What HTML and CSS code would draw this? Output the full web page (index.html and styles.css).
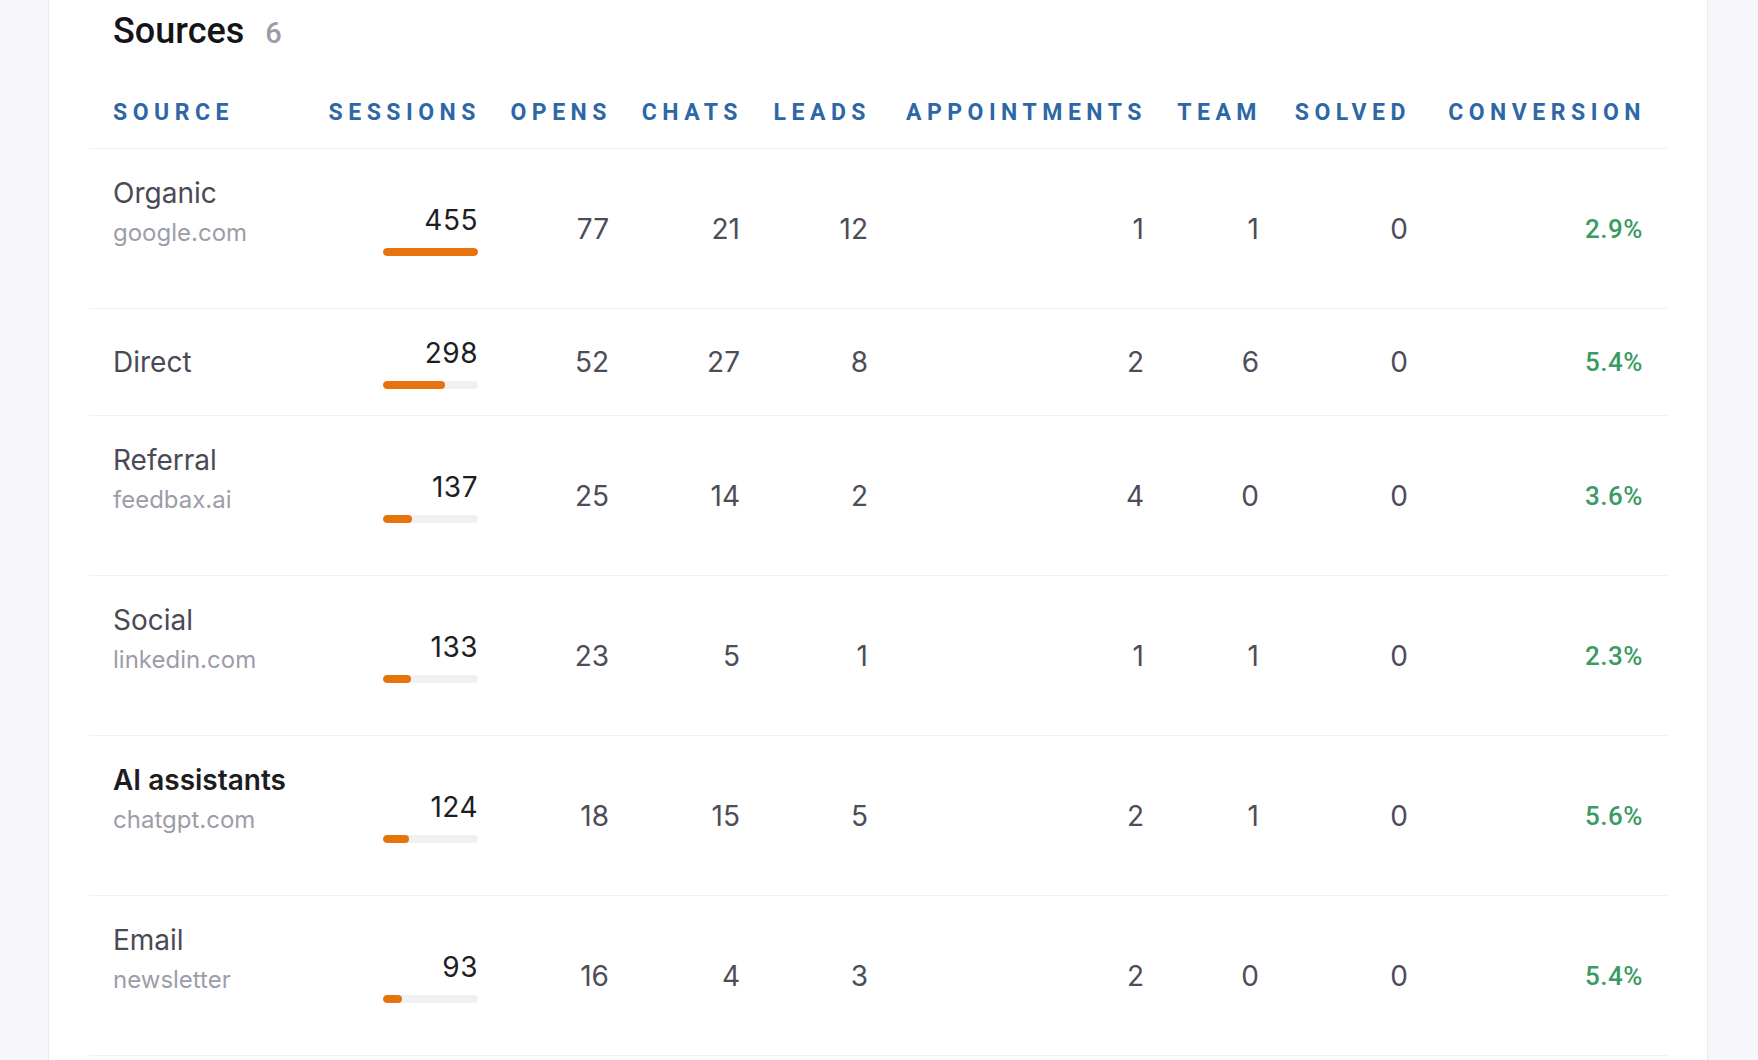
FILE: index.html
```html
<!DOCTYPE html>
<html lang="en">
<head>
<meta charset="utf-8">
<title>Sources</title>
<link rel="stylesheet" href="styles.css">
</head>
<body>
<div class="page">
  <section class="card">
    <h2 class="title">Sources <span class="count">6</span></h2>
    <table class="sources">
      <colgroup>
        <col class="w-source"><col class="w-sessions"><col class="w-opens"><col class="w-chats"><col class="w-leads"><col class="w-appts"><col class="w-team"><col class="w-solved"><col class="w-conv">
      </colgroup>
      <thead>
        <tr>
          <th class="left"><span>Source</span></th>
          <th><span>Sessions</span></th>
          <th><span>Opens</span></th>
          <th><span>Chats</span></th>
          <th><span>Leads</span></th>
          <th><span>Appointments</span></th>
          <th><span>Team</span></th>
          <th><span>Solved</span></th>
          <th class="last"><span>Conversion</span></th>
        </tr>
      </thead>
      <tbody>
        <tr>
          <td class="src"><div class="name">Organic</div><div class="sub">google.com</div></td>
          <td class="sess"><div class="num">455</div><div class="track"><div class="fill" style="width:100%"></div></div></td>
          <td>77</td><td>21</td><td>12</td><td>1</td><td>1</td><td>0</td>
          <td class="conv">2.9%</td>
        </tr>
        <tr>
          <td class="src"><div class="name">Direct</div></td>
          <td class="sess"><div class="num">298</div><div class="track"><div class="fill" style="width:65.5%"></div></div></td>
          <td>52</td><td>27</td><td>8</td><td>2</td><td>6</td><td>0</td>
          <td class="conv">5.4%</td>
        </tr>
        <tr>
          <td class="src"><div class="name">Referral</div><div class="sub">feedbax.ai</div></td>
          <td class="sess"><div class="num">137</div><div class="track"><div class="fill" style="width:30.1%"></div></div></td>
          <td>25</td><td>14</td><td>2</td><td>4</td><td>0</td><td>0</td>
          <td class="conv">3.6%</td>
        </tr>
        <tr>
          <td class="src"><div class="name">Social</div><div class="sub">linkedin.com</div></td>
          <td class="sess"><div class="num">133</div><div class="track"><div class="fill" style="width:29.2%"></div></div></td>
          <td>23</td><td>5</td><td>1</td><td>1</td><td>1</td><td>0</td>
          <td class="conv">2.3%</td>
        </tr>
        <tr class="highlight">
          <td class="src"><div class="name">AI assistants</div><div class="sub">chatgpt.com</div></td>
          <td class="sess"><div class="num">124</div><div class="track"><div class="fill" style="width:27.3%"></div></div></td>
          <td>18</td><td>15</td><td>5</td><td>2</td><td>1</td><td>0</td>
          <td class="conv">5.6%</td>
        </tr>
        <tr>
          <td class="src"><div class="name">Email</div><div class="sub">newsletter</div></td>
          <td class="sess"><div class="num">93</div><div class="track"><div class="fill" style="width:20.4%"></div></div></td>
          <td>16</td><td>4</td><td>3</td><td>2</td><td>0</td><td>0</td>
          <td class="conv">5.4%</td>
        </tr>
      </tbody>
    </table>
  </section>
</div>
</body>
</html>
```

FILE: styles.css
```css
* { box-sizing: border-box; }

html, body {
  margin: 0;
  padding: 0;
  height: 100%;
  background: #f7f7fb;
  overflow: hidden;
}

body {
  font-family: Inter, "Noto Sans", sans-serif;
  color: #4b4b57;
}

.page {
  padding: 0 0 0 48px;
}

.card {
  width: 1660px;
  min-height: 1060px;
  background: #ffffff;
  border-left: 1px solid #e9e9ef;
  border-right: 1px solid #e9e9ef;
  padding: 0 40px;
}

.title {
  display: flex;
  align-items: baseline;
  gap: 21px;
  margin: 0;
  padding: 12px 0 0 24px;
  height: 50px;
  font-family: Roboto, "Liberation Sans", sans-serif;
  font-weight: 500;
  font-size: 36px;
  line-height: 38px;
  color: #141418;
}

.count {
  font-size: 29px;
  font-weight: 500;
  color: #9c9ca8;
}

.sources {
  width: 1578px;
  table-layout: fixed;
  border-collapse: collapse;
}

.w-source { width: 211px; }
.w-sessions { width: 178px; }
.w-opens { width: 131px; }
.w-chats { width: 131px; }
.w-leads { width: 128px; }
.w-appts { width: 276px; }
.w-team { width: 115px; }
.w-solved { width: 149px; }
.w-conv { width: 259px; }

.sources th {
  padding: 49px 0 21px 0;
  text-align: right;
  font-family: Roboto, "Liberation Sans", sans-serif;
  font-weight: 700;
  font-size: 23px;
  line-height: 28px;
  letter-spacing: 5.5px;
  text-transform: uppercase;
  color: #2d67a6;
  border-bottom: 1px solid #f0f0f3;
  white-space: nowrap;
}

.sources th span {
  margin-right: -3px;
}

.sources th.left {
  text-align: left;
  padding-left: 24px;
}

.sources th.left span {
  margin-right: 0;
}

.sources th.last {
  padding-right: 24px;
}

.sources td {
  padding: 26px 0;
  text-align: right;
  vertical-align: middle;
  font-size: 28px;
  line-height: 36px;
  color: #4d4d59;
  border-bottom: 1px solid #f0f0f3;
}

.sources td.src {
  text-align: left;
  padding-left: 24px;
  white-space: nowrap;
}

.name {
  font-size: 28px;
  line-height: 36px;
  color: #4a4a56;
}

.sub {
  margin-top: 6px;
  margin-bottom: 33px;
  font-size: 24px;
  line-height: 32px;
  color: #9d9daa;
}

.highlight .name {
  font-weight: 600;
  color: #1c1c21;
}

.sess .num {
  color: #1d1d22;
  letter-spacing: 0.5px;
}

.track {
  width: 95px;
  height: 8px;
  margin: 10px 0 0 auto;
  border-radius: 4px;
  background: #f1f1f4;
  overflow: hidden;
}

.fill {
  height: 100%;
  border-radius: 4px;
  background: #e8720c;
}

.sources td.conv {
  padding-right: 24px;
  font-family: Roboto, "Liberation Sans", sans-serif;
  font-weight: 500;
  font-size: 26px;
  letter-spacing: 0.5px;
  color: #3c9a65;
}
```
